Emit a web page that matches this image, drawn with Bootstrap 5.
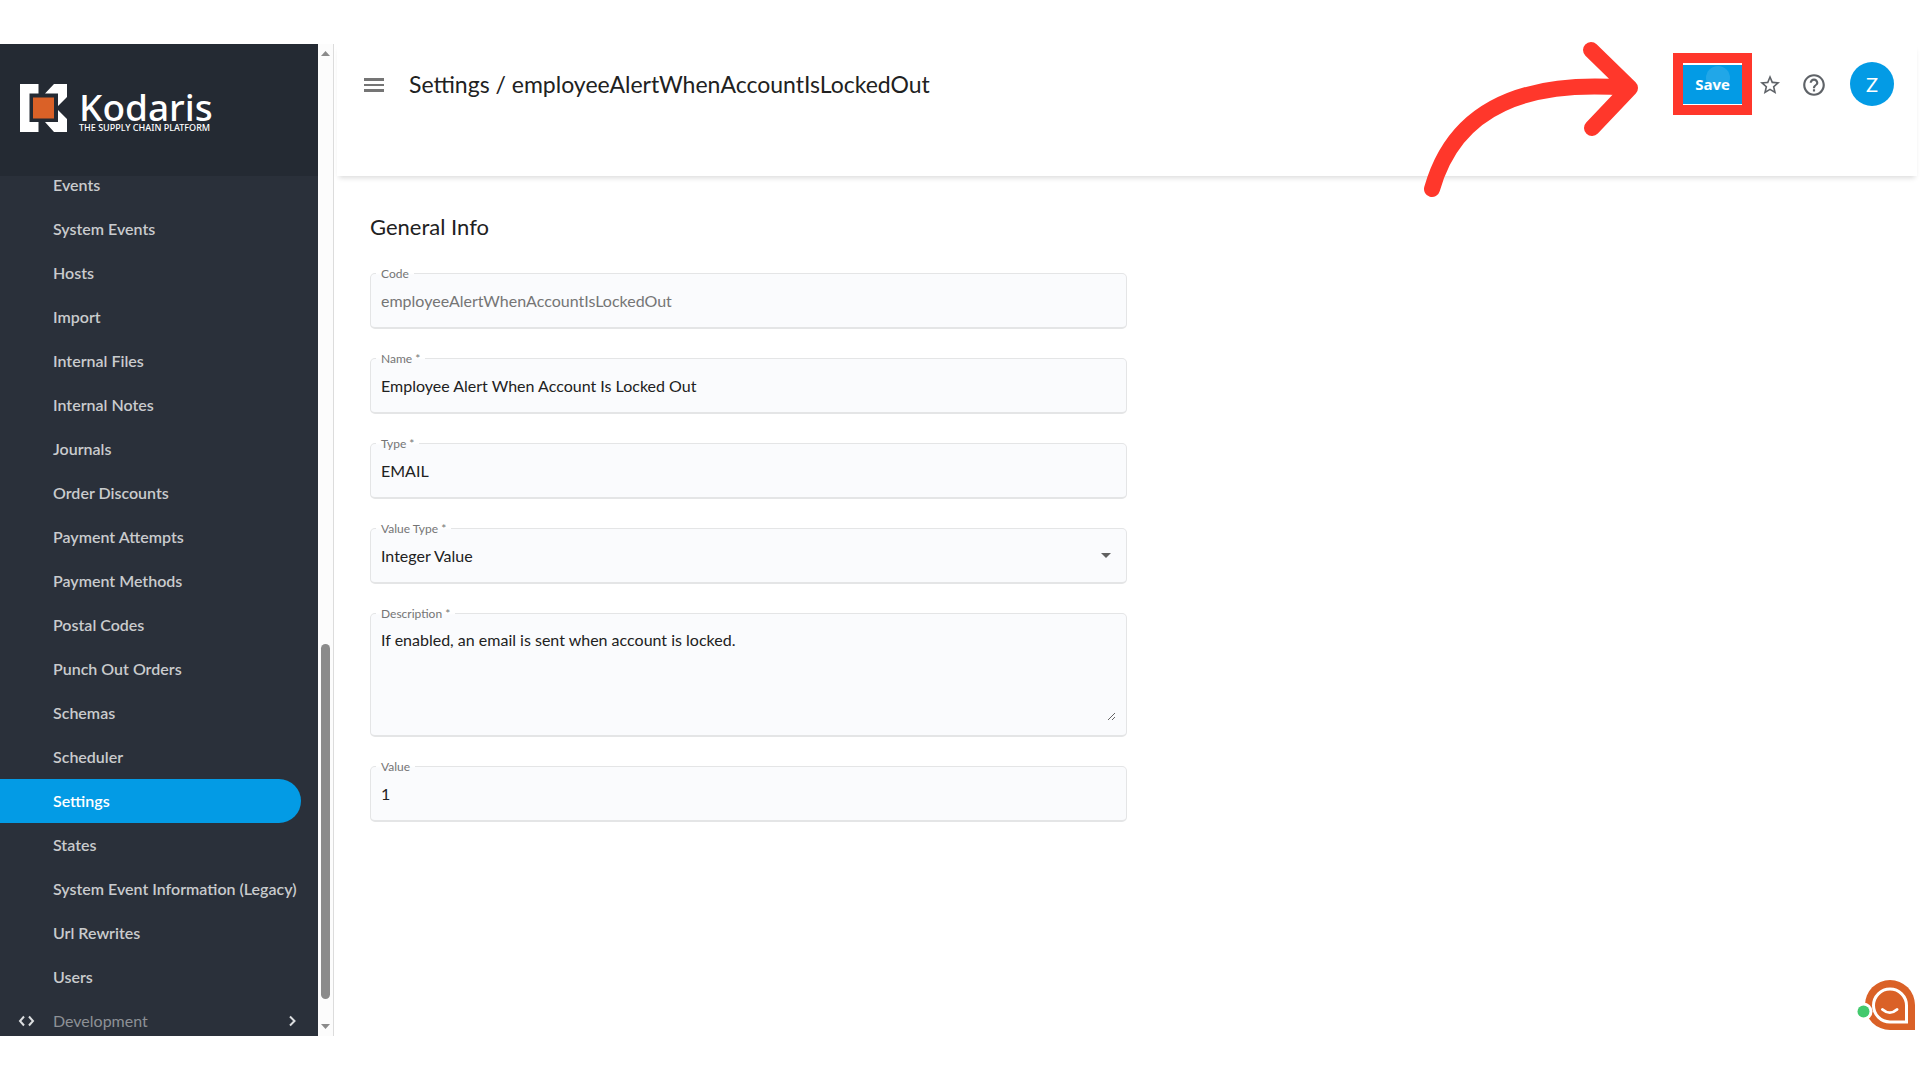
<!DOCTYPE html>
<html lang="en">
<head>
<meta charset="utf-8">
<meta name="viewport" content="width=device-width, initial-scale=1">
<title>Settings / employeeAlertWhenAccountIsLockedOut</title>
<link rel="stylesheet" href="https://cdn.jsdelivr.net/npm/bootstrap@5.3.0/dist/css/bootstrap.min.css">
<style>
  body { font-family: Lato, "Open Sans", sans-serif; font-size: 16px; line-height: 20px; color: #212121; background: #fff; }
  .app-shell { height: 100vh; padding: 44px 0; }

  /* Sidebar */
  .side-panel { width: 318px; background: #2a303a; color: #c9cbcd; }
  .brand-bar { height: 132px; padding: 40px 20px 0; background: #242a33; }
  .brand-mark { display: flex; gap: 12px; color: #fff; font-family: "Noto Sans", sans-serif; font-weight: 500; text-decoration: none; }
  .brand-name { font-size: 37px; line-height: 32px; }
  .brand-tag { font-size: 9px; line-height: 9px; white-space: nowrap; }
  .menu-clip { overflow: hidden; }
  .menu-list { margin-top: -13px; flex-wrap: nowrap; }
  .menu-list .nav-link { display: flex; align-items: center; height: 44px; margin-right: 17px; padding: 0 0 0 53px; color: #c9cbcd; font-weight: 600; white-space: nowrap; border-radius: 0 22px 22px 0; }
  .menu-list .nav-link.active { background: #039be5; color: #fff; }
  .menu-list .menu-group { padding-left: 18px; gap: 17px; padding-right: 2px; font-weight: 400; color: #8d9196; }
  .menu-group svg { color: #dcdee0; }

  /* Scroll track beside the sidebar */
  .scroll-track { width: 16px; padding: 7px 0; background: #fcfcfc; border-right: 1px solid #dcdcdc; color: #8b8b8b; }
  .scroll-gap { flex: 587 0 0; }
  .scroll-thumb { flex: 355 0 0; width: 9px; border-radius: 5px; background: #8b8b8b; }
  .scroll-rest { flex: 25 0 0; }

  /* Page header */
  .page-bar { position: relative; height: 132px; padding: 9px 23px 0 27px; margin: 0 3px; box-shadow: 0 4px 5px -2px rgba(0,0,0,.14); }
  .page-tools { height: 62px; }
  .plain-btn { padding: 0; border: 0; background: none; display: flex; align-items: center; justify-content: center; color: #5f6368; }
  .tool-btn { width: 36px; height: 36px; }
  .tool-btn, .menu-btn { padding-top: 2px; }
  .menu-btn { margin-right: 25px; color: #757575; }
  .page-title { font-size: 23px; line-height: 30px; font-weight: 400; }
  .save-frame { border: 10px solid #ff372b; width: 79px; height: 62px; display: flex; align-items: center; }
  .save-frame .btn { position: relative; width: 100%; height: 39px; padding: 0; border: 0; border-radius: 0; background: #039be5; color: #fff; font: 700 15px/20px "Open Sans", sans-serif; }
  .save-frame .btn::after { content: ""; position: absolute; left: 23px; top: 1px; width: 24px; height: 24px; border-radius: 50%; background: rgba(255,255,255,.12); }
  .user-dot { width: 44px; height: 44px; margin-left: 18px; border-radius: 50%; background: #039be5; color: #fff; font-size: 20px; }
  .pointer-arrow { position: absolute; right: 277px; top: -8px; pointer-events: none; }

  /* Form */
  .form-area { padding: 36px 36px 0; }
  .section-title { font-size: 22px; line-height: 30px; font-weight: 400; margin-bottom: 31px; }
  .field-stack { display: flex; flex-direction: column; gap: 29px; }
  .field-box { position: relative; border: 1px solid #e4e5e6; border-bottom-width: 2px; border-radius: 5px; background: #fafbfd; }
  .field-box > label { position: absolute; left: 5px; top: -8px; padding: 0 5px; font-size: 12px; line-height: 16px; color: #757575; background: linear-gradient(#fff 7px, #fafbfd 9px); }
  .field-box .form-control, .field-box .form-select { display: block; height: 53px; padding: 0 10px; border: 0; background-color: transparent; color: #212121; font-size: 16px; line-height: 20px; box-shadow: none; }
  .field-box .form-control:disabled { color: #757575; }
  .field-box .form-select { --bs-form-select-bg-img: url("data:image/svg+xml,%3csvg xmlns='http://www.w3.org/2000/svg' viewBox='0 0 10 5'%3e%3cpath fill='%23616161' d='M0 0h10L5 5z'/%3e%3c/svg%3e"); background-size: 10px 5px; background-position: right 15px center; }
  .field-box.field-tall { padding: 16px 10px 14px; }
  .field-box textarea.form-control { height: 91px; min-height: 91px; padding: 0; border-radius: 0; }

  .chat-btn { position: fixed; right: 5px; bottom: 49px; padding: 0; border: 0; background: none; line-height: 0; }
</style>
<script src="https://cdn.jsdelivr.net/npm/bootstrap@5.3.0/dist/js/bootstrap.bundle.min.js"></script>
</head>
<body class="overflow-hidden">
<div class="app-shell d-flex">

  <aside class="side-panel d-flex flex-column flex-shrink-0">
    <div class="brand-bar flex-shrink-0">
      <a class="brand-mark align-items-end" href="#">
        <svg width="47" height="48" viewBox="0 0 47 48" aria-hidden="true">
          <path fill="#fff" d="M0 0h18.500v9.500H9.500V38h9v10H0zM34 0h13v13l-9 9V9.500H25zM38 26l9 9v13H34l-9-10h13z"/>
          <path fill="#da6127" d="M13 13.500h21v21H13z"/>
        </svg>
        <span class="d-flex flex-column">
          <span class="brand-name">Kodaris</span>
          <span class="brand-tag">THE SUPPLY CHAIN PLATFORM</span>
        </span>
      </a>
    </div>
    <nav class="menu-clip flex-grow-1" aria-label="Main">
      <div class="menu-list nav flex-column">
        <a class="nav-link" href="#">Events</a>
        <a class="nav-link" href="#">System Events</a>
        <a class="nav-link" href="#">Hosts</a>
        <a class="nav-link" href="#">Import</a>
        <a class="nav-link" href="#">Internal Files</a>
        <a class="nav-link" href="#">Internal Notes</a>
        <a class="nav-link" href="#">Journals</a>
        <a class="nav-link" href="#">Order Discounts</a>
        <a class="nav-link" href="#">Payment Attempts</a>
        <a class="nav-link" href="#">Payment Methods</a>
        <a class="nav-link" href="#">Postal Codes</a>
        <a class="nav-link" href="#">Punch Out Orders</a>
        <a class="nav-link" href="#">Schemas</a>
        <a class="nav-link" href="#">Scheduler</a>
        <a class="nav-link active" href="#" aria-current="page">Settings</a>
        <a class="nav-link" href="#">States</a>
        <a class="nav-link" href="#">System Event Information (Legacy)</a>
        <a class="nav-link" href="#">Url Rewrites</a>
        <a class="nav-link" href="#">Users</a>
        <a class="nav-link menu-group" href="#">
          <svg width="18" height="12" viewBox="0 0 18 12" fill="none" stroke="currentColor" stroke-width="2" aria-hidden="true"><path d="M6 1.500 2 6l4 4.500M11 1.500 15 6l-4 4.500"/></svg>
          Development
          <svg class="ms-auto" width="12" height="12" viewBox="0 0 12 12" fill="none" stroke="currentColor" stroke-width="2" aria-hidden="true"><path d="m3 1.500 4.500 4.500L3 10.500"/></svg>
        </a>
      </div>
    </nav>
  </aside>

  <div class="scroll-track d-flex flex-column align-items-center flex-shrink-0" aria-hidden="true">
    <svg width="9" height="5" viewBox="0 0 9 5"><path fill="currentColor" d="M0 5h9L4.500 0z"/></svg>
    <div class="scroll-gap"></div>
    <div class="scroll-thumb"></div>
    <div class="scroll-rest"></div>
    <svg width="9" height="5" viewBox="0 0 9 5"><path fill="currentColor" d="M0 0h9L4.500 5z"/></svg>
  </div>

  <main class="flex-grow-1">
    <header class="page-bar">
      <div class="page-tools d-flex align-items-center">
        <button class="plain-btn menu-btn" type="button" aria-label="Toggle menu">
          <svg width="20" height="14" viewBox="0 0 20 14" fill="currentColor"><path d="M0 0h20v3H0zM0 6h20v2H0zM0 11h20v3H0z"/></svg>
        </button>
        <h1 class="page-title mb-0 me-auto">Settings / employeeAlertWhenAccountIsLockedOut</h1>
        <div class="save-frame"><button class="btn" type="button">Save</button></div>
        <button class="plain-btn tool-btn" type="button" aria-label="Favorite">
          <svg width="24" height="24" viewBox="0 0 24 24" fill="currentColor"><path d="m22 9.240-7.190-.620L12 2 9.190 8.630 2 9.240l5.460 4.730L5.820 21 12 17.270 18.180 21l-1.630-7.030zM12 15.400l-3.760 2.270 1-4.280-3.320-2.880 4.380-.380L12 6.100l1.710 4.040 4.380.380-3.320 2.880 1 4.280z"/></svg>
        </button>
        <button class="plain-btn tool-btn ms-2" type="button" aria-label="Help">
          <svg width="26" height="26" viewBox="0 0 24 24" fill="currentColor"><path d="M11 18h2v-2h-2zm1-16C6.480 2 2 6.480 2 12s4.480 10 10 10 10-4.480 10-10S17.520 2 12 2m0 18c-4.410 0-8-3.590-8-8s3.590-8 8-8 8 3.590 8 8-3.590 8-8 8m0-14c-2.210 0-4 1.790-4 4h2c0-1.100.900-2 2-2s2 .900 2 2c0 2-3 1.750-3 5h2c0-2.250 3-2.500 3-5 0-2.210-1.790-4-4-4"/></svg>
        </button>
        <button class="plain-btn user-dot" type="button" aria-label="Account Z">Z</button>
      </div>
      <svg class="pointer-arrow" width="220" height="165" viewBox="1420 36 220 165" fill="none" stroke="#ff372b" stroke-width="16" stroke-linecap="round" stroke-linejoin="round" aria-hidden="true">
        <path d="M1432 189C1456 104 1530 80 1628 88M1591 50l39 38-38 40"/>
      </svg>
    </header>

    <form class="form-area">
      <div class="row g-0">
        <div class="col-6">
          <h2 class="section-title">General Info</h2>
          <div class="field-stack">
            <div class="field-box">
              <input class="form-control" id="code" type="text" value="employeeAlertWhenAccountIsLockedOut" disabled>
              <label for="code">Code</label>
            </div>
            <div class="field-box">
              <input class="form-control" id="name" type="text" value="Employee Alert When Account Is Locked Out">
              <label for="name">Name *</label>
            </div>
            <div class="field-box">
              <input class="form-control" id="type" type="text" value="EMAIL">
              <label for="type">Type *</label>
            </div>
            <div class="field-box">
              <select class="form-select" id="valueType"><option>Integer Value</option></select>
              <label for="valueType">Value Type *</label>
            </div>
            <div class="field-box field-tall">
              <textarea class="form-control" id="description">If enabled, an email is sent when account is locked.</textarea>
              <label for="description">Description *</label>
            </div>
            <div class="field-box">
              <input class="form-control" id="value" type="text" value="1">
              <label for="value">Value</label>
            </div>
          </div>
        </div>
      </div>
    </form>
  </main>
</div>

<button class="chat-btn" type="button" aria-label="Open chat">
  <svg width="59" height="52" viewBox="0 0 59 52" aria-hidden="true">
    <path fill="#da6127" d="M34 1a25 25 0 0 1 25 25v25H34a25 25 0 0 1 0-50z"/>
    <circle cx="7.500" cy="32.500" r="9" fill="#fff"/>
    <circle cx="7.500" cy="32.500" r="6" fill="#43c96d"/>
    <path fill="none" stroke="#fff" stroke-width="3" d="M34 10a16.500 16.500 0 0 1 16.500 16.500V43H34a16.500 16.500 0 0 1 0-33z"/>
    <path fill="none" stroke="#fff" stroke-width="3" stroke-linecap="round" d="M26.500 30.500c4.500 4 10 4 14.500 0"/>
  </svg>
</button>
</body>
</html>
